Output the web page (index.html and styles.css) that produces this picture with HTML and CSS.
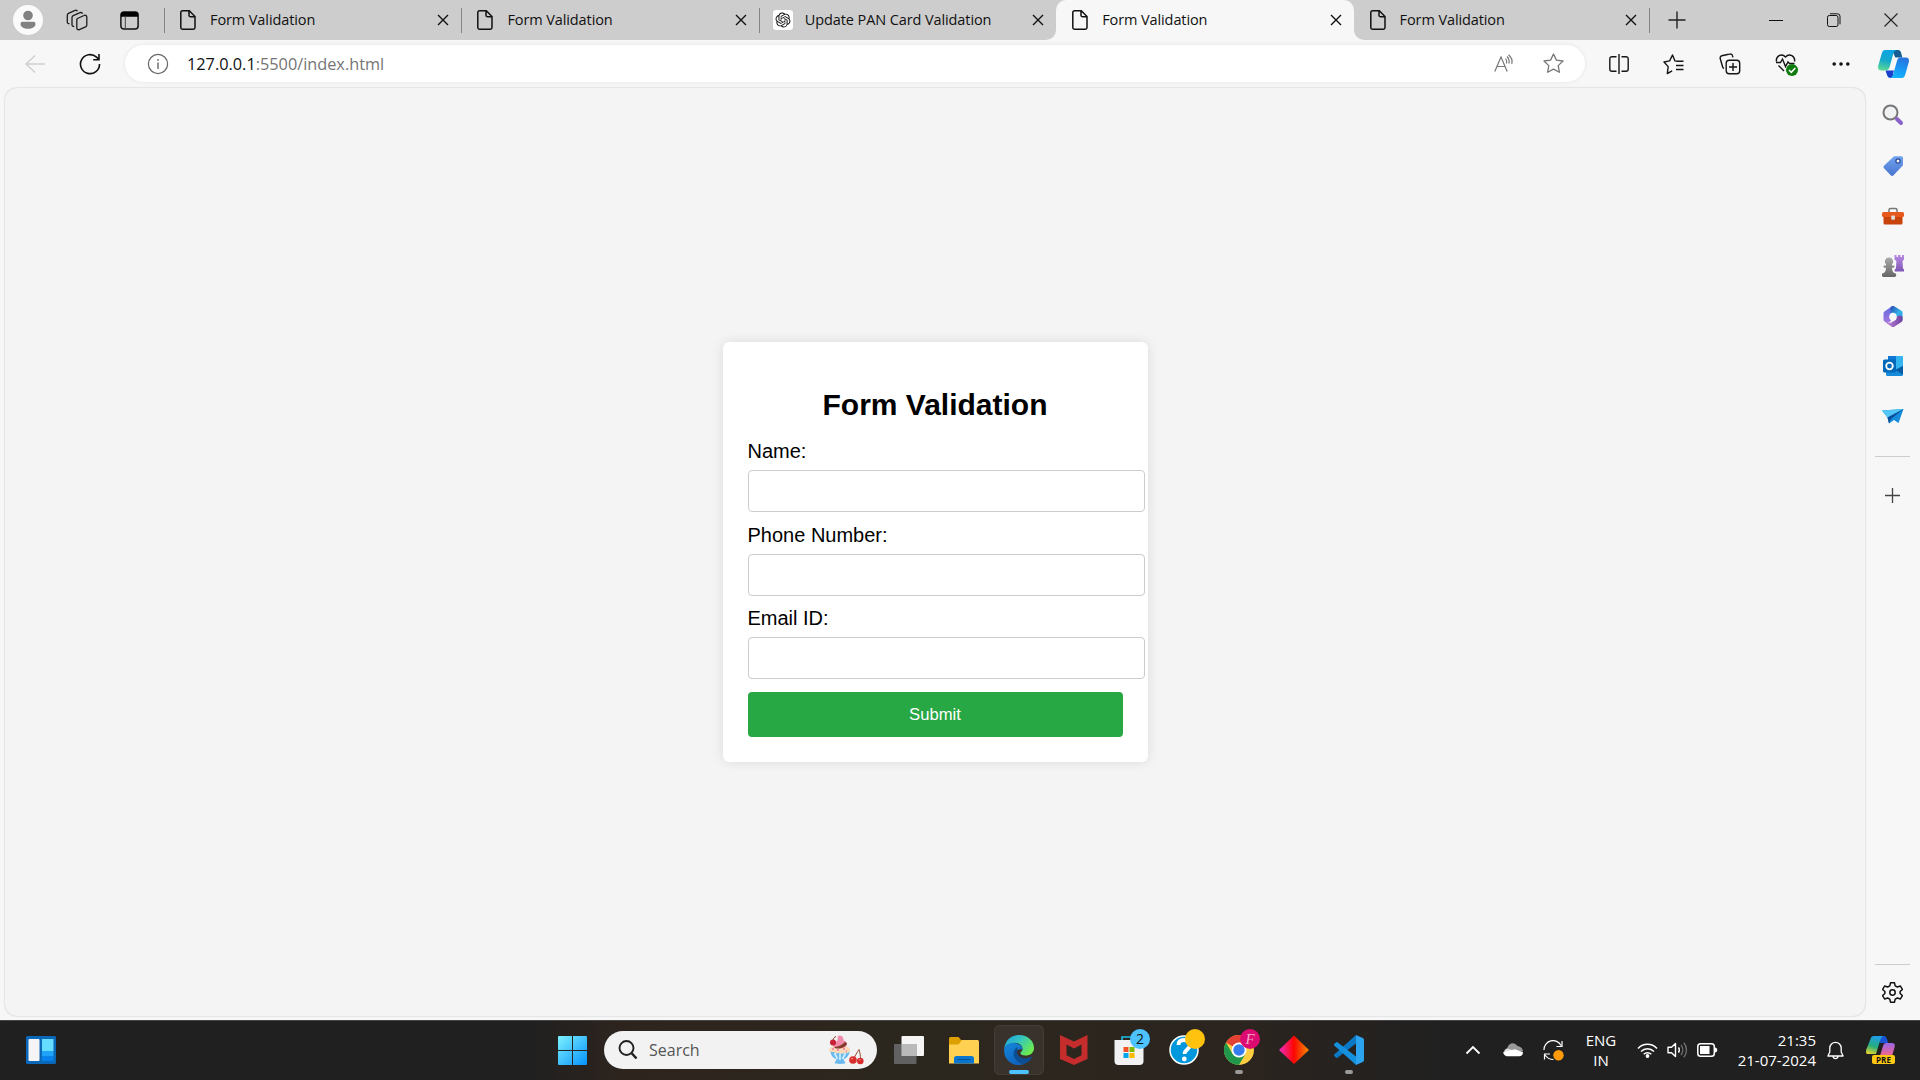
FILE: index.html
```html
<!DOCTYPE html>
<html lang="en">
<head>
<meta charset="utf-8">
<title>Form Validation</title>
<link rel="stylesheet" href="styles.css">
</head>
<body>
<svg class="defs" width="0" height="0" aria-hidden="true">
  <symbol id="file" viewBox="0 0 20 20"><path d="M4.5.8h6.8L17 6.500V17.500a1.700 1.700 0 0 1-1.700 1.700H4.500a1.700 1.700 0 0 1-1.700-1.700v-15A1.700 1.700 0 0 1 4.500.8zM11 1v4.200a1.600 1.600 0 0 0 1.600 1.600H17" fill="none" stroke="#111" stroke-width="1.500"/></symbol>
  <symbol id="x" viewBox="0 0 12 12"><path d="M1 1l10 10M11 1L1 11" stroke="#111" stroke-width="1.400" fill="none"/></symbol>
</svg>

<header class="tabstrip">
  <div class="strip-tools">
    <svg width="30" height="30" viewBox="0 0 30 30"><circle cx="15" cy="15" r="15" fill="#fafafa"/><circle cx="15" cy="10.500" r="4.800" fill="#828282"/><path d="M9.500 16.800h11a2 2 0 0 1 2 2c0 3.200-3.300 5-7.500 5s-7.500-1.800-7.500-5a2 2 0 0 1 2-2z" fill="#828282"/></svg>
    <svg width="22" height="22" viewBox="0 0 22 22" fill="none" stroke="#1b1b1b" stroke-width="1.300" stroke-linejoin="round"><path d="M11.500 9.500l6.500-3a1.800 1.800 0 0 1 2.800 1.500v8a2 2 0 0 1-1.200 1.800l-6.300 2.800A1.800 1.800 0 0 1 10.800 19v-7.600a2 2 0 0 1 .7-1.900z"/><path d="M8.200 17.200A1.500 1.500 0 0 1 6 16V8.500a2 2 0 0 1 1.200-1.800L14 3.700a1.800 1.800 0 0 1 2.500 1"/><path d="M3.500 14.500a1.500 1.500 0 0 1-2.200-1.200V6.200A2 2 0 0 1 2.500 4.400l6.500-3a1.800 1.800 0 0 1 2.500.8"/></svg>
    <svg width="19" height="19" viewBox="0 0 19 19"><rect x=".9" y=".9" width="17.200" height="17.200" rx="3" fill="none" stroke="#111" stroke-width="1.500"/><path d="M1 5.700V3.500A2.500 2.500 0 0 1 3.500 1h12A2.500 2.500 0 0 1 18 3.500v2.200z" fill="#000"/><path d="M5.300 5v13" stroke="#444" stroke-width="1"/></svg>
  </div>
  <div class="tab divided"><svg class="fav"><use href="#file"/></svg><span class="tab-title">Form Validation</span><svg class="tab-x"><use href="#x"/></svg></div>
  <div class="tab divided"><svg class="fav"><use href="#file"/></svg><span class="tab-title">Form Validation</span><svg class="tab-x"><use href="#x"/></svg></div>
  <div class="tab divided"><svg class="fav" viewBox="0 0 20 20"><rect width="20" height="20" rx="3" fill="#fff"/><path transform="translate(2.500 2.500) scale(.625)" fill="#111" d="M22.2819 9.8211a5.9847 5.9847 0 0 0-.5157-4.9108 6.0462 6.0462 0 0 0-6.5098-2.9A6.0651 6.0651 0 0 0 4.9807 4.1818a5.9847 5.9847 0 0 0-3.9977 2.9 6.0462 6.0462 0 0 0 .7427 7.0966 5.98 5.98 0 0 0 .511 4.9107 6.051 6.051 0 0 0 6.5146 2.9001A5.9847 5.9847 0 0 0 13.2599 24a6.0557 6.0557 0 0 0 5.7718-4.2058 5.9894 5.9894 0 0 0 3.9977-2.9001 6.0557 6.0557 0 0 0-.7475-7.0729zm-9.022 12.6081a4.4755 4.4755 0 0 1-2.8764-1.0408l.1419-.0804 4.7783-2.7582a.7948.7948 0 0 0 .3927-.6813v-6.7369l2.02 1.1686a.071.071 0 0 1 .038.052v5.5826a4.504 4.504 0 0 1-4.4945 4.4944zm-9.6607-4.1254a4.4708 4.4708 0 0 1-.5346-3.0137l.142.0852 4.783 2.7582a.7712.7712 0 0 0 .7806 0l5.8428-3.3685v2.3324a.0804.0804 0 0 1-.0332.0615L9.74 19.9502a4.4992 4.4992 0 0 1-6.1408-1.6464zM2.3408 7.8956a4.485 4.485 0 0 1 2.3655-1.9728V11.6a.7664.7664 0 0 0 .3879.6765l5.8144 3.3543-2.0201 1.1685a.0757.0757 0 0 1-.071 0l-4.8303-2.7865A4.504 4.504 0 0 1 2.3408 7.872zm16.5963 3.8558L13.1038 8.364 15.1192 7.2a.0757.0757 0 0 1 .071 0l4.8303 2.7913a4.4944 4.4944 0 0 1-.6765 8.1042v-5.6772a.79.79 0 0 0-.407-.667zm2.0107-3.0231l-.142-.0852-4.7735-2.7818a.7759.7759 0 0 0-.7854 0L9.409 9.2297V6.8974a.0662.0662 0 0 1 .0284-.0615l4.8303-2.7866a4.4992 4.4992 0 0 1 6.6802 4.66zM8.3065 12.863l-2.02-1.1638a.0804.0804 0 0 1-.038-.0567V6.0742a4.4992 4.4992 0 0 1 7.3757-3.4537l-.142.0805L8.704 5.459a.7948.7948 0 0 0-.3927.6813zm1.0976-2.3654l2.602-1.4998 2.6069 1.4998v2.9994l-2.5974 1.4997-2.6067-1.4997Z"/></svg><span class="tab-title">Update PAN Card Validation</span><svg class="tab-x"><use href="#x"/></svg></div>
  <div class="tab active"><svg class="fav"><use href="#file"/></svg><span class="tab-title">Form Validation</span><svg class="tab-x"><use href="#x"/></svg></div>
  <div class="tab last"><svg class="fav"><use href="#file"/></svg><span class="tab-title">Form Validation</span><svg class="tab-x"><use href="#x"/></svg></div>
  <div class="new-tab divided"><svg width="18" height="18" viewBox="0 0 18 18"><path d="M9 .5v17M.5 9h17" stroke="#222" stroke-width="1.400"/></svg></div>
  <div class="window-controls">
    <svg width="14" height="14"><path d="M0 7.500h14" stroke="#111"/></svg>
    <svg width="14" height="14" fill="none" stroke="#111"><rect x=".5" y="2.500" width="10.500" height="11" rx="1.800"/><path d="M3 .8h7.500a2.500 2.500 0 0 1 2.500 2.500v8"/></svg>
    <svg width="14" height="14"><path d="M.5.5l13 13M13.500.5l-13 13" stroke="#222" stroke-width="1.100"/></svg>
  </div>
</header>

<nav class="toolbar">
  <div class="nav-buttons">
    <svg width="20" height="20" viewBox="0 0 20 20" fill="none" stroke="#cfcfcf" stroke-width="1.400"><path d="M20 10H1M10 1.500L1 10l9 8.500"/></svg>
    <svg width="22" height="22" viewBox="0 0 22 22" fill="none" stroke="#111" stroke-width="1.600"><path d="M20.500 11A9.500 9.500 0 1 1 17.500 4.200L20 6.500M20 1v5.800h-5.800"/></svg>
  </div>
  <div class="address">
    <svg width="22" height="22" viewBox="0 0 22 22" fill="none" stroke="#666" stroke-width="1.200"><circle cx="11" cy="11" r="9.600"/><path d="M11 9.500v6.500M11 6v1.800" stroke-width="1.400"/></svg>
    <span class="url"><span class="host">127.0.0.1</span>:5500/index.html</span>
    <svg class="read" width="20" height="20" viewBox="0 0 20 20" fill="none" stroke="#777" stroke-width="1.200"><path d="M.8 17.500L7 3l6.200 14.500M3 12.500h8M11.500 4.500c1.200 1.500 1.500 3 1 5M13 2.500c2 2 2.500 4.500 2 7M14.500.8c3 2.500 4.200 5.500 3.300 9"/></svg>
    <svg width="21" height="21" viewBox="0 0 21 21" fill="none" stroke="#777" stroke-width="1.300" stroke-linejoin="round"><path d="M10.500 1l2.900 6.100 6.600.9-4.800 4.600 1.200 6.700-5.900-3.200-5.900 3.200 1.200-6.700L1 8l6.600-.9z"/></svg>
  </div>
  <div class="actions">
    <svg width="20" height="20" viewBox="0 0 20 20" fill="none" stroke="#151515" stroke-width="1.400"><path d="M7.500 2.700H3a2.200 2.200 0 0 0-2.200 2.200v10.200A2.200 2.200 0 0 0 3 17.300h4.500M12.500 2.700H17a2.200 2.200 0 0 1 2.200 2.200v10.200a2.200 2.200 0 0 1-2.200 2.200h-4.500M10 0v20"/></svg>
    <svg width="21" height="21" viewBox="0 0 21 21" fill="none" stroke="#151515" stroke-width="1.400" stroke-linejoin="round"><path d="M14.500 7.300L12 6.900 9.500 1 6.600 6.900 1 8l4.200 4.600-.9 7 4.800-2.800M14 7.200h6.500M13 11.500h7.500M13 15.500h7.500"/></svg>
    <svg width="22" height="22" viewBox="0 0 22 22" fill="none" stroke="#151515" stroke-width="1.400"><path d="M5 15.500A3 3 0 0 1 3.500 13.500L1.200 5.500a2.200 2.200 0 0 1 1.600-2.700l8-1.800A2.200 2.200 0 0 1 13.500 2.700l.4 1.600"/><rect x="7.200" y="7.200" width="13.500" height="13.500" rx="3"/><path d="M14 10v8M10 14h8"/></svg>
    <svg width="24" height="23" viewBox="0 0 24 23"><path d="M9 18L3.500 12.500M1.500 8.500C.5 3.500 6.500-.5 10.500 4c4-4.500 10-.5 9 4.500M1 9.500h4.500l2-3.500 3 7.500 2.500-4.500 1.500 1.500h5" fill="none" stroke="#151515" stroke-width="1.400"/><circle cx="17" cy="17" r="6" fill="#107c10"/><path d="M14 17l2.300 2.300 4-4.300" stroke="#fff" stroke-width="1.500" fill="none"/></svg>
    <svg width="18" height="6" fill="#111"><circle cx="2.200" cy="3" r="1.800"/><circle cx="9" cy="3" r="1.800"/><circle cx="15.800" cy="3" r="1.800"/></svg>
  </div>
  <svg class="copilot" width="31" height="28" viewBox="0 0 31 28">
    <defs>
      <linearGradient id="cpa" x1=".4" y1="0" x2=".2" y2="1"><stop offset="0" stop-color="#0aa5e6"/><stop offset=".5" stop-color="#17a9c9"/><stop offset="1" stop-color="#5fdc93"/></linearGradient>
      <linearGradient id="cpb" x1=".7" y1="0" x2=".4" y2="1"><stop offset="0" stop-color="#2872dc"/><stop offset=".6" stop-color="#169bf5"/><stop offset="1" stop-color="#16b4fb"/></linearGradient>
    </defs>
    <path d="M14 0h6c2 0 2.800 1.500 3.300 3.500l1 4h-7z" fill="#155e93"/>
    <path d="M7.500 20.500L9 25c.7 2 1.800 3 3.500 3 3 0 2-3 3.500-7.500z" fill="#1940cc"/>
    <path d="M7 0h12c-2 0-3 1-3.800 4l-3.300 12c-.8 3-2 4.500-4.400 4.500H3C.5 20.500-.5 18.500.3 15.500L3.600 4C4.300 1.500 5.300 0 7 0z" fill="url(#cpa)"/>
    <path d="M22.500 7.500H28c2.500 0 3.500 2 2.700 5l-3.300 11.500c-.7 2.500-1.700 4-3.400 4H11.500c2 0 3-1 3.800-4l3.500-12.500c.7-2.700 1.700-4 3.700-4z" fill="url(#cpb)"/>
  </svg>
</nav>

<div class="browser-body">
  <main class="page">
    <form class="card">
      <h2>Form Validation</h2>
      <label>Name:</label>
      <input type="text">
      <label>Phone Number:</label>
      <input type="text">
      <label>Email ID:</label>
      <input type="text">
      <button type="button">Submit</button>
    </form>
  </main>
  <aside class="sidebar">
    <div class="side-icons">
      <svg viewBox="0 0 22 22"><circle cx="8.500" cy="8.500" r="7" fill="#f0f1f2" stroke="#767676" stroke-width="2"/><path d="M15 15l4 4" stroke="#8a62cb" stroke-width="4" stroke-linecap="round"/></svg>
      <svg viewBox="0 -.7 22 22"><defs><linearGradient id="tg" x2="0" y2="1"><stop stop-color="#72a4f0"/><stop offset="1" stop-color="#4874cf"/></linearGradient></defs><path d="M12 1.500h7.500A1.500 1.500 0 0 1 21 3v7.500L11.500 20.500a2 2 0 0 1-2.800 0L2 13.500a2 2 0 0 1 0-2.500z" fill="url(#tg)"/><circle cx="16" cy="6.200" r="2.100" fill="#f2f6ff" stroke="#254590" stroke-width="1.200"/></svg>
      <svg viewBox="0 -1.500 22 22"><path d="M7 7V4.500A1.500 1.500 0 0 1 8.500 3h5A1.500 1.500 0 0 1 15 4.500V7" fill="none" stroke="#777" stroke-width="1.500"/><path d="M1.500 10h19v7.500a1.500 1.500 0 0 1-1.500 1.500H3a1.500 1.500 0 0 1-1.500-1.500z" fill="#c9430d"/><rect x="0" y="6.500" width="22" height="5" rx="1.500" fill="#e7581c"/><rect x="9.200" y="10" width="3.800" height="4.200" rx="1" fill="#ddd"/></svg>
      <svg viewBox="0 0 22 22"><defs><linearGradient id="rk" x2="0" y2="1"><stop stop-color="#b98ae6"/><stop offset="1" stop-color="#7f57b5"/></linearGradient><linearGradient id="pw" x2="0" y2="1"><stop stop-color="#aaa"/><stop offset="1" stop-color="#666"/></linearGradient></defs><path d="M12.500 0h2v2h1.500V0h2.500v2H20V0h2v4.500l-1.500 1.500.5 7.500 1.200 1v2h-9.500v-2l1.200-1 .5-7.500-1.900-1.500z" fill="url(#rk)"/><path d="M7 2.500a4 4 0 0 1 3 6.800v1.200h1.500a1 1 0 0 1 0 2.200H10c0 2.800.8 3.800 2 5.300h.3a2 2 0 0 1 0 4H1.800a2 2 0 0 1 0-4H2c1.200-1.500 2-2.500 2-5.300H2.500a1 1 0 0 1 0-2.200H4V9.300A4 4 0 0 1 7 2.500z" fill="url(#pw)"/></svg>
      <svg viewBox="0 -.7 22 22"><defs><linearGradient id="ma" x2="0" y2="1"><stop stop-color="#5c6be0"/><stop offset="1" stop-color="#a678e0"/></linearGradient><linearGradient id="mb" x2="1" y2="1"><stop stop-color="#2449b0"/><stop offset=".6" stop-color="#35b5ea"/><stop offset="1" stop-color="#2c86e0"/></linearGradient><linearGradient id="mc" x2="1"><stop stop-color="#c98be0"/><stop offset="1" stop-color="#6b3fa0"/></linearGradient></defs><path d="M11.500.2L9 6.500 8 11l1 4-3.500 2.500-3-1.800a2 2 0 0 1-1-1.700V7.500a2 2 0 0 1 1-1.700L9.500.8a3 3 0 0 1 2-.6z" fill="url(#ma)"/><path d="M8.500 8V3.200C8.500 1 10.500-.4 12.500.8l7 4.200a2 2 0 0 1 1 1.700v7.800L14 11V8.500L11 6.800z" fill="url(#mb)"/><path d="M20.500 11v3.500a2 2 0 0 1-1 1.700l-7.300 4.900a2.300 2.300 0 0 1-2.400 0l-6.300-4.300 4.500.2c1 0 1.600-.3 3-1.200l3-1.800V11l3.500-1.500z" fill="url(#mc)"/><circle cx="11" cy="11" r="3.800" fill="#f7f7f7"/></svg>
      <svg viewBox="0 0 22 22"><rect x="6" y="1" width="15" height="13" rx="1" fill="#34b5f0"/><path d="M6 1h8v6H6z" fill="#0f78d4"/><path d="M4 12l9 3 8-4v8.500a1.500 1.500 0 0 1-1.500 1.500H5.500A1.500 1.500 0 0 1 4 19.500z" fill="#168bd8"/><path d="M13 15l8-4v8.500z" fill="#075ba5"/><rect x="1" y="4.500" width="13" height="13" rx="1.500" fill="#0068b9"/><circle cx="7.500" cy="11" r="3.300" fill="none" stroke="#fff" stroke-width="1.800"/></svg>
      <svg viewBox="0 0 22 22"><path d="M0 5.500L21.500 4 16.500 18 12 15l-5 3.500-1.500-6z" fill="#168ddc"/><path d="M0 5.500L21.500 4 5.500 12.500z" fill="#53c6f5"/><path d="M5.500 12.500L21.500 4 9 14l-2 4.500z" fill="#0a4f99"/></svg>
    </div>
    <hr>
    <svg class="side-add" width="15" height="15"><path d="M7.500 0v15M0 7.500h15" stroke="#444" stroke-width="1.300"/></svg>
    <hr class="lower">
    <svg class="gear" width="21" height="21" viewBox="0 0 21 21" fill="none" stroke="#111" stroke-width="1.500" stroke-linejoin="round"><path d="M8.500.8h4l.7 3 2.200 1.200 3-1 2 3.500-2.300 2v2l2.300 2-2 3.500-3-1-2.200 1.200-.7 3h-4l-.7-3-2.200-1.200-3 1-2-3.500 2.300-2v-2l-2.300-2 2-3.500 3 1 2.200-1.200z"/><circle cx="10.500" cy="10.500" r="2.700"/></svg>
  </aside>
</div>

<footer class="taskbar">
  <svg class="widgets" width="30" height="28" viewBox="0 0 30 28"><rect width="30" height="28" rx="1.500" fill="#0b67b8"/><rect x="2.500" y="3" width="11" height="22" rx="1" fill="#f5f5f5"/><path d="M16 3h11.500v12H16z" fill="#66dcff"/><path d="M16 15h11.500v5.500H16z" fill="#1ea2fa"/><path d="M16 20.500h11.500V25H16z" fill="#0582ee"/></svg>
  <div class="center">
    <svg class="start" width="29" height="29" viewBox="0 0 29 29"><defs><linearGradient id="wn" x2="1" y2="1"><stop stop-color="#7cf3ff"/><stop offset=".5" stop-color="#42c1fd"/><stop offset="1" stop-color="#0492fc"/></linearGradient></defs><path d="M1 0h13v14H0V1a1 1 0 0 1 1-1zM15 0h13a1 1 0 0 1 1 1v13H15zM0 15h14v14H1a1 1 0 0 1-1-1zM15 15h14v13a1 1 0 0 1-1 1H15z" fill="url(#wn)"/></svg>
    <div class="search">
      <svg width="20" height="20" viewBox="0 0 20 20" fill="none" stroke="#222" stroke-width="1.900"><circle cx="8.500" cy="8" r="7"/><path d="M13.500 13l5 5.500" stroke-width="2.500"/></svg>
      <span>Search</span>
      <svg class="treat" width="36" height="30" viewBox="0 0 36 30">
        <path d="M2.500 16h19c0 4-2.500 7-6 8.500l2 3.500c-1.500 1.200-9.500 1.200-11 0l2-3.500c-3.500-1.500-6-4.500-6-8.500z" fill="#68b9ef"/><path d="M6.500 18l3 6M12 18v7M17.500 18l-3 6" stroke="#d0efff" stroke-width="1.700"/>
        <path d="M1.500 16c-1.500-3 2-4.500 4-4.500h12c4 0 6 3 3.500 5.500-2 2-3 0-4.500 1s-3.500 1-4.500 0-3 1.500-4.500 0-5 0-6-2z" fill="#f9d9b7"/>
        <path d="M5 11c-1-3 2-4 4-5 2-1-1-5 2.500-5.500 3 0 4.500 3 4 5 3 .5 4.500 3 3 5.500-2 3-12 3-13.500 0z" fill="#f28aaa"/><path d="M6 12c5-.5 8-2 11-5l2 1.500c-1 3-5 5.500-11 5z" fill="#813c2c"/><path d="M4 14h2M9 15h2M15 14h2M18 16h1" stroke="#e74b91"/>
        <circle cx="5" cy="7.500" r="3" fill="#c82035"/><path d="M5 5c.5-2 1.500-3 3-3.500" stroke="#873a2a" fill="none"/>
        <path d="M26 24c1-4 3-6 5-9.500 1 3 1.500 6 1.500 10" fill="none" stroke="#934c31"/><circle cx="25" cy="25" r="3.800" fill="#d82c2d"/><circle cx="32.300" cy="26" r="3.300" fill="#d82c2d"/><path d="M23 24l2-.8M31 25l1.500-.5" stroke="#ff9c8c"/>
      </svg>
    </div>
    <div class="apps">
      <div class="app"><svg viewBox="0 0 30 30"><rect x="7.500" y="1" width="22.500" height="20" rx="1" fill="#f5f5f5"/><rect x="0" y="9" width="22.500" height="20" rx="1" fill="#686868" fill-opacity=".9"/><path d="M7.500 9h15v12h-15z" fill="#bababa"/></svg></div>
      <div class="app"><svg viewBox="0 0 30 30"><path d="M0 3.500A1.500 1.500 0 0 1 1.500 2h8L12 5h17v5H0z" fill="#dea000"/><path d="M0 9.500h9.500L13 5h15.500A1.500 1.500 0 0 1 30 6.500V28.500H0z" fill="#ffd052"/><path d="M5 28.500v-5a2.500 2.500 0 0 1 2.500-2.500h15a2.500 2.500 0 0 1 2.500 2.500v5z" fill="#0876ce"/><path d="M8.500 24.500h13" stroke="#075398"/></svg></div>
      <div class="app focused"><svg viewBox="0 0 30 30"><defs><linearGradient id="eg" x2="1" y2=".6"><stop stop-color="#1b9de2"/><stop offset=".5" stop-color="#35c6bd"/><stop offset="1" stop-color="#6beb50"/></linearGradient><linearGradient id="eb" x2=".5" y2="1"><stop stop-color="#1488db"/><stop offset="1" stop-color="#1064bd"/></linearGradient></defs><path d="M.2 14C1 5.500 7 0 15 0c9 0 15 6 15 13 0 5-4 7.500-8.500 7.500-3 0-5.500-1-5-3 1-1 2-2 2-3.500C18.500 9.500 13 7 9 8 4.500 8.500 1 11 .2 14z" fill="url(#eg)"/><path d="M.2 14C1.500 9 6.500 7.500 10 8c5 .5 9 3.500 8.500 6.500-5-1-8 2-7.500 6 .5 4.500 4 8 9 8.500-10 4-21-4-19.800-15z" fill="url(#eb)"/><path d="M13.500 12c-7 4-4.500 15 6.500 17 4-1.300 6.500-3.800 7.800-6.300.3-.7-.2-1-.8-.7-6 3-13 1-14-4.500-.3-2.300.5-4 .5-5.500z" fill="#0b4e94"/></svg></div>
      <div class="app"><svg viewBox="0 0 30 30"><path d="M1 0l14 6.500L28.500 0v24L15 30 1 24zM7.500 9.500v10.800L15 24l7.500-3.700V9.500L15 13.500z" fill="#c52d2d" fill-rule="evenodd"/></svg></div>
      <div class="app"><svg viewBox="0 0 30 30"><path d="M8 7V2h12" fill="none" stroke="#1dbfe9" stroke-width="1.600"/><path d="M.5 5h29v21a4 4 0 0 1-4 4h-21a4 4 0 0 1-4-4z" fill="#f2f2f2"/><path d="M9.500 12h5v5h-5z" fill="#f25022"/><path d="M15.500 12h5v5h-5z" fill="#7fba00"/><path d="M9.500 18h5v5h-5z" fill="#00a4ef"/><path d="M15.500 18h5v5h-5z" fill="#ffb900"/></svg><span class="badge blue">2</span></div>
      <div class="app"><svg viewBox="0 0 30 30"><circle cx="15" cy="15" r="14" fill="#0097dc" stroke="#fff" stroke-width="1.500"/><path d="M9.500 10c0-3 2-5 5.500-5s6 2 6 5c0 4-5.500 4.500-5.500 9" fill="none" stroke="#fff" stroke-width="3.800"/><circle cx="15.300" cy="24" r="2.400" fill="#fff"/></svg><span class="badge yellow"></span></div>
      <div class="app open"><svg viewBox="0 0 30 30"><circle cx="15" cy="15" r="15" fill="#ffcd42"/><path d="M15 15L2 7.500A15 15 0 0 1 28 7.500H15z" fill="#e34133"/><path d="M2 7.500A15 15 0 0 0 15 30l6.500-11.300L8.500 18.700z" fill="#21974b"/><circle cx="15" cy="15" r="7.500" fill="#fff"/><circle cx="15" cy="15" r="5.700" fill="#367cf1"/></svg><span class="badge pink">F</span></div>
      <div class="app"><svg viewBox="0 0 30 30"><defs><linearGradient id="dg"><stop stop-color="#f12cc4"/><stop offset=".5" stop-color="#ff0500"/><stop offset=".6" stop-color="#f42400"/><stop offset="1" stop-color="#ff8c00"/></linearGradient></defs><path d="M15 .500L30 15 15 29 0 15z" fill="url(#dg)"/></svg></div>
      <div class="app open"><svg viewBox="0 0 30 30"><path d="M22 0v8.500L3.800 22.500a1.500 1.500 0 0 1-2 0L.5 21.200a1.300 1.300 0 0 1 0-2z" fill="#0b78c6"/><path d="M22 30v-8.500L3.800 7.500a1.500 1.500 0 0 0-2 0L.5 8.800a1.300 1.300 0 0 0 0 2z" fill="#1590dd"/><path d="M22 0l6.800 3a2 2 0 0 1 1.200 1.800v20.400a2 2 0 0 1-1.200 1.800L22 30z" fill="#2ba3ef"/></svg></div>
    </div>
  </div>
  <div class="tray">
    <svg class="chev" width="16" height="10" fill="none" stroke="#fff" stroke-width="1.800"><path d="M1.500 8.500L8 2l6.500 6.500"/></svg>
    <svg class="cloud" width="20" height="14" viewBox="0 0 20 14"><path d="M4 6C5 0 11-2 14.500 3c3 .5 5.500 2.500 5.500 5.500L9 9z" fill="#999"/><path d="M3.500 5.500c3 0 4.500 1 6 2L4 13a4 4 0 0 1-.5-7.500z" fill="#ddd"/><path d="M3.500 13.300C1 12 0 10.300.3 9L12 6.200l8 3c0 2.500-1.500 4.100-4 4.100z" fill="#fff"/></svg>
    <svg class="sync" width="21" height="21" viewBox="0 0 21 21"><path d="M1 10A9 9 0 0 1 18 5.500M19 1v5.500h-5.500M1.500 19.500V14H7M2 15c2 3 5 4.500 8.500 4.500" fill="none" stroke="#fff" stroke-width="1.200"/><circle cx="15.500" cy="15.200" r="5.200" fill="#ff9b0b"/></svg>
    <div class="lang"><span>ENG</span><span>IN</span></div>
    <div class="status">
      <svg width="21" height="16" viewBox="0 0 21 16" fill="none" stroke="#fff" stroke-width="1.500"><path d="M1 6.500a13 13 0 0 1 19 0M4 9.500a9 9 0 0 1 13 0M6.700 12.300a5.300 5.300 0 0 1 7.600 0"/><circle cx="10.500" cy="14" r="1.900" fill="#fff" stroke="none"/></svg>
      <svg width="21" height="16" viewBox="0 0 21 16" fill="none" stroke="#fff" stroke-width="1.400"><path d="M1 5.300h3.500L8.500 1.500v13L4.500 10.700H1z" stroke-linejoin="round"/><path d="M11.500 5.300a5 5 0 0 1 0 5.400"/><path d="M14 3a8 8 0 0 1 0 10M16.800.8a11 11 0 0 1 0 14.400" stroke="#6e6e6e"/></svg>
      <svg width="21" height="16" viewBox="0 0 21 16"><rect x=".8" y="1.800" width="16.500" height="12.400" rx="2.800" fill="none" stroke="#fff" stroke-width="1.500"/><rect x="3" y="4" width="9.500" height="8" fill="#fff"/><path d="M18 5.500c3 0 3 5 0 5z" fill="#fff"/></svg>
    </div>
    <div class="clock"><span>21:35</span><span>21-07-2024</span></div>
    <svg class="bell" width="17" height="19" viewBox="0 0 17 19" fill="none" stroke="#fff" stroke-width="1.300" stroke-linejoin="round"><path d="M2.800 7a5.700 5.700 0 0 1 11.400 0v4l1.900 4H.9l1.900-4zM6 15.300c.5 3 4.500 3 5 0"/></svg>
    <div class="pre">
      <svg width="29" height="20" viewBox="0 0 29 20"><defs><linearGradient id="pa" x1=".5" x2=".2" y2="1"><stop stop-color="#209fe8"/><stop offset=".55" stop-color="#25ad7d"/><stop offset="1" stop-color="#e5d52c"/></linearGradient><linearGradient id="pb" x2="0" y2="1"><stop stop-color="#9967e5"/><stop offset="1" stop-color="#f5668c"/></linearGradient></defs><path d="M14 0h4c2 0 3 2 4 7h-8z" fill="#1753d4"/><path d="M8 0h10c-2 0-3 2-4 5l-4 13H2c-2 0-2.500-2-1.500-5L4.500 3C5 1 6 0 8 0z" fill="url(#pa)"/><path d="M20 7h6c2.500 0 3.500 2 2.500 4.500L26 20H14l3-10c.5-2 1.500-3 3-3z" fill="url(#pb)"/></svg>
      <span>PRE</span>
    </div>
  </div>
</footer>
</body>
</html>
```
FILE: styles.css
```css
* { box-sizing: border-box; }
body {
  margin: 0;
  width: 1920px;
  height: 1080px;
  overflow: hidden;
  display: flex;
  flex-direction: column;
  background: #f7f7f7;
  font-family: "Open Sans", "Noto Sans", sans-serif;
  color: #111;
}
svg { display: block; flex: none; }
.defs { position: absolute; }

/* Tab strip */
.tabstrip { height: 40px; display: flex; background: linear-gradient(#f7f7f7, #f7f7f7) 1046px 20px / 320px 20px no-repeat #cdcdcd; }
.strip-tools { width: 164px; padding-left: 13px; display: flex; align-items: center; }
.strip-tools svg:nth-child(2) { margin-left: 23px; }
.strip-tools svg:nth-child(3) { margin-left: 32px; }
.tab { width: 297.400px; display: flex; align-items: center; padding: 0 12px 0 14px; background: #cdcdcd; }
.tab.last { width: 295.400px; }
.divided { background: linear-gradient(#858585, #858585) 0 8px / 1px 25px no-repeat #cdcdcd; }
.tab.active { background: #f7f7f7; border-radius: 10px 10px 0 0; }
.tab:has(+ .active) { border-bottom-right-radius: 10px; }
.tab.active + .tab { border-bottom-left-radius: 10px; }
.fav { width: 20px; height: 20px; margin-right: 12px; }
.tab-title { font-size: 14.500px; letter-spacing: -0.1px; line-height: 20px; white-space: nowrap; }
.tab-x { width: 12px; height: 12px; margin-left: auto; }
.new-tab { width: 60px; padding: 0 0 1px 19px; display: flex; align-items: center; }
.window-controls { margin-left: auto; padding: 0 22px 1px 0; display: flex; align-items: center; gap: 43.500px; }

/* Toolbar */
.toolbar { height: 48px; display: flex; align-items: center; }
.nav-buttons { width: 125px; padding-left: 25px; display: flex; align-items: center; gap: 34px; }
.address {
  width: 1460px;
  height: 37px;
  margin-top: -1px;
  padding: 0 21px 0 22px;
  display: flex;
  align-items: center;
  background: #fff;
  border-radius: 19px;
  box-shadow: 0 0 4px rgba(0, 0, 0, .08);
}
.url { margin-left: 18px; font-size: 16.300px; color: #757575; letter-spacing: 0; white-space: nowrap; }
.host { color: #111; }
.read { margin-left: auto; margin-right: 29px; }
.actions { width: 293px; padding-left: 24px; display: flex; align-items: center; gap: 34.400px; }
.actions svg:last-child { margin-left: -2px; }

/* Browser body */
.browser-body { height: 932px; display: flex; }
.page {
  width: 1860px;
  height: 928px;
  margin-left: 5px;
  display: flex;
  align-items: center;
  justify-content: center;
  background: #f4f4f4;
  border-radius: 12px;
  box-shadow: 0 0 2px rgba(0, 0, 0, .25);
}
.card {
  width: 425px;
  height: 420px;
  padding: 25px;
  background: #fff;
  border-radius: 6px;
  box-shadow: 0 0 12px rgba(0, 0, 0, .1);
  font: 20px/23px "Liberation Sans", Arial, sans-serif;
  color: #000;
}
.card h2 { margin: 20px 0 18px; font-size: 30px; line-height: 35px; text-align: center; }
.card label { display: block; height: 23px; margin-bottom: 7px; }
.card input { display: block; width: 397px; height: 42px; margin: 0 0 11.500px; border: 1px solid #ccc; border-radius: 4px; background: #fff; }
.card button {
  display: block;
  width: 375px;
  height: 45px;
  margin-top: 13px;
  padding: 0;
  border: 0;
  border-radius: 4px;
  background: #28a745;
  color: #fff;
  font: 16.670px "Liberation Sans", Arial, sans-serif;
}

/* Sidebar */
.sidebar { width: 55px; display: flex; flex-direction: column; align-items: center; padding-top: 16px; }
.side-icons { display: flex; flex-direction: column; gap: 28.200px; }
.side-icons svg { width: 22px; height: 22px; }
.sidebar hr { width: 35px; height: 1px; border: 0; margin: 29px 0 0; background: #ccc; flex: none; }
.side-add { margin-top: 31px; }
.sidebar .lower { margin-top: auto; }
.gear { margin: 17px 0 17px; }

/* Taskbar */
.taskbar {
  height: 60px;
  padding-bottom: 1px;
  display: flex;
  align-items: center;
  border-top: 1px solid #464646;
  background: linear-gradient(90deg, #202020 530px, #2d241e 620px, #2c271e 900px, #2b241f 1250px, #202020 1450px);
}
.widgets { margin-left: 26px; }
.center { display: flex; align-items: center; margin-left: 502px; }
.search { width: 273px; height: 38px; margin-left: 17px; padding: 0 13px 0 14px; display: flex; align-items: center; background: #f2f2f2; border-radius: 19px; color: #555; }
.search span { margin-left: 11px; font-size: 16px; }
.treat { margin-left: auto; }
.apps { display: flex; gap: 5px; margin-left: 7px; }
.app { position: relative; width: 50px; height: 50px; display: flex; align-items: center; justify-content: center; border-radius: 6px; }
.app svg { width: 30px; height: 30px; }
.focused { background: #39322c; box-shadow: inset 0 0 0 1px #443c35; }
.focused::after, .open::after { content: ""; position: absolute; bottom: 1px; left: 21px; width: 8px; height: 4px; border-radius: 2px; background: #999; }
.focused::after { left: 15px; width: 20px; background: #4cc2ff; }
.badge { position: absolute; left: 26px; top: 4px; width: 20px; height: 20px; border-radius: 50%; text-align: center; font-size: 14px; line-height: 20px; }
.blue { background: #4cc2ff; }
.yellow { background: #ffc20e; }
.pink { background: #dc0b72; color: #f5a4c7; font: italic 15px/20px "Liberation Serif", serif; }

.tray { margin-left: auto; padding-right: 25px; display: flex; align-items: center; color: #fff; font-size: 15px; line-height: 20px; }
.cloud { margin-left: 22px; }
.sync { margin-left: 20px; }
.lang { width: 40px; margin-left: 17px; display: flex; flex-direction: column; align-items: center; }
.status { display: flex; gap: 9px; margin-left: 16px; }
.clock { width: 84px; margin-left: 14px; display: flex; flex-direction: column; align-items: flex-end; white-space: nowrap; }
.bell { margin-left: 11px; }
.pre { width: 29px; height: 28px; margin-left: 22px; position: relative; }
.pre span { position: absolute; left: 6px; bottom: 0; width: 23px; height: 9px; border-radius: 2px; background: #ffc913; color: #111; font-size: 8px; font-weight: 700; line-height: 9px; text-align: center; }
```
